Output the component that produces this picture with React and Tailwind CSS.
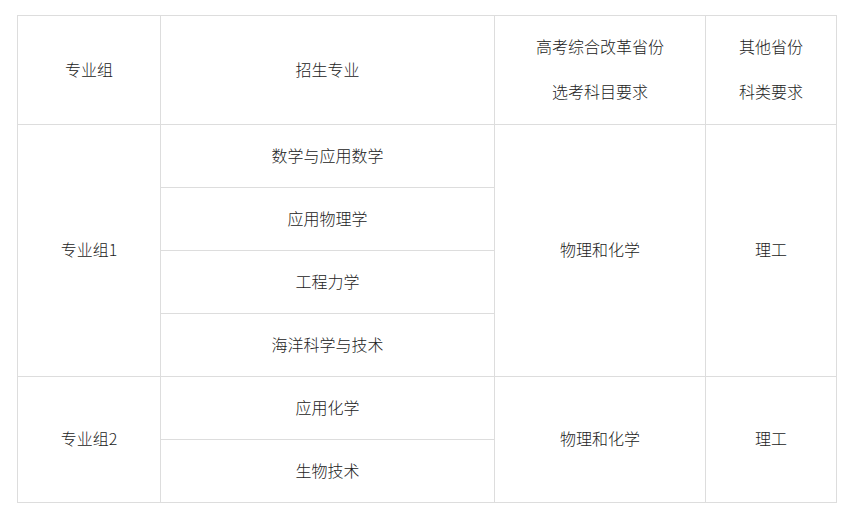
import React from "react";

const font = { fontFamily: '"Noto Sans CJK SC", "Noto Sans", sans-serif' };

function Cell({ className = "", children }) {
  return (
    <div
      className={
        "flex flex-col items-center justify-center border-r border-b border-[#dddddd] pb-[3px] text-[16px] font-light text-[#222222] " +
        className
      }
    >
      {children}
    </div>
  );
}

export default function App() {
  return (
    <div className="w-[865px] h-[522px] bg-white pt-[15px] pl-[17px]" style={font}>
      <div className="grid w-[820px] grid-cols-[143px_334px_211px_131px] grid-rows-[109px_repeat(6,63px)] border-l border-t border-[#dddddd]">
        <Cell className="row-start-1 col-start-1">专业组</Cell>
        <Cell className="row-start-1 col-start-2">招生专业</Cell>
        <Cell className="row-start-1 col-start-3 leading-[45px]">
          <span>高考综合改革省份</span>
          <span>选考科目要求</span>
        </Cell>
        <Cell className="row-start-1 col-start-4 leading-[45px]">
          <span>其他省份</span>
          <span>科类要求</span>
        </Cell>

        <Cell className="row-start-2 row-span-4 col-start-1">专业组1</Cell>
        <Cell className="row-start-2 col-start-2">数学与应用数学</Cell>
        <Cell className="row-start-3 col-start-2">应用物理学</Cell>
        <Cell className="row-start-4 col-start-2">工程力学</Cell>
        <Cell className="row-start-5 col-start-2">海洋科学与技术</Cell>
        <Cell className="row-start-2 row-span-4 col-start-3">物理和化学</Cell>
        <Cell className="row-start-2 row-span-4 col-start-4">理工</Cell>

        <Cell className="row-start-6 row-span-2 col-start-1">专业组2</Cell>
        <Cell className="row-start-6 col-start-2">应用化学</Cell>
        <Cell className="row-start-7 col-start-2">生物技术</Cell>
        <Cell className="row-start-6 row-span-2 col-start-3">物理和化学</Cell>
        <Cell className="row-start-6 row-span-2 col-start-4">理工</Cell>
      </div>
    </div>
  );
}
